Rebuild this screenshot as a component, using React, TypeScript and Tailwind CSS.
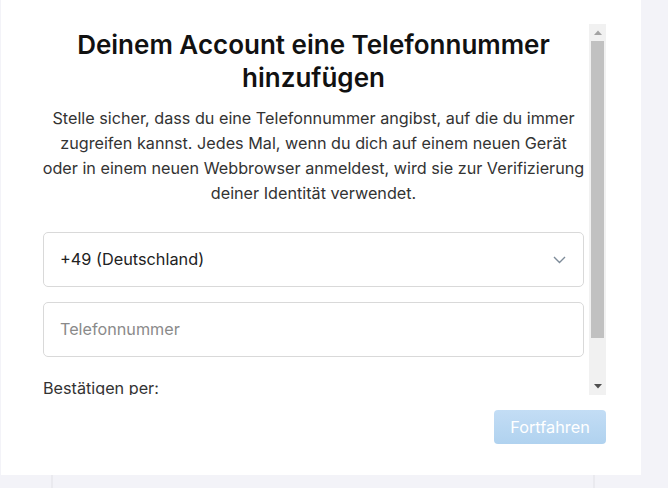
import React from "react";

function Chevron() {
  return (
    <svg width="13" height="8" viewBox="0 0 13 8" fill="none">
      <polyline points="1,1 6.5,6.5 12,1" stroke="#7d8b99" strokeWidth="1.4" fill="none" />
    </svg>
  );
}

function Scrollbar() {
  return (
    <div className="w-[17px] h-[371px] bg-[#f1f1f1] flex flex-col shrink-0">
      <div className="h-[17px] flex items-center justify-center">
        <svg width="8" height="5" viewBox="0 0 8 5">
          <polygon points="0,5 8,5 4,0.5" fill="#a3a3a3" />
        </svg>
      </div>
      <div className="mx-[2px] h-[297px] bg-[#c1c1c1]" />
      <div className="flex-1" />
      <div className="h-[17px] flex items-center justify-center">
        <svg width="8" height="5" viewBox="0 0 8 5">
          <polygon points="0,0 8,0 4,4.5" fill="#505050" />
        </svg>
      </div>
    </div>
  );
}

export default function App() {
  return (
    <div
      className="w-[668px] h-[488px] bg-[#f3f3f8] overflow-hidden"
      style={{ fontFamily: "Inter, 'Noto Sans', sans-serif" }}
    >
      <div className="ml-[1px] w-[640px] h-[475px] bg-white pl-[42px] pr-[35px] pt-[24px] flex flex-col">
        <div className="flex gap-[5px] h-[371px]">
          <div className="w-[541px] h-[371px] overflow-hidden pt-[4px]">
            <h1 className="text-[26px] leading-[33px] font-semibold text-[#111111] text-center">
              Deinem Account eine Telefonnummer hinzufügen
            </h1>
            <p className="mt-[12px] -mx-[8px] text-[16.2px] leading-[25px] text-[#333333] text-center whitespace-nowrap">
              Stelle sicher, dass du eine Telefonnummer angibst, auf die du immer
              <br />
              zugreifen kannst. Jedes Mal, wenn du dich auf einem neuen Gerät
              <br />
              oder in einem neuen Webbrowser anmeldest, wird sie zur Verifizierung
              <br />
              deiner Identität verwendet.
            </p>
            <div className="mt-[26px] h-[55px] border border-[#d9d9d9] rounded-[5px] flex items-center justify-between pl-[16px] pr-[17px]">
              <span className="text-[16.3px] text-[#222222]">+49 (Deutschland)</span>
              <Chevron />
            </div>
            <div className="mt-[15px] h-[55px] border border-[#d9d9d9] rounded-[5px] flex items-center pl-[16px]">
              <span className="text-[16.2px] text-[#8a8a8a]">Telefonnummer</span>
            </div>
            <div className="mt-[19px] text-[16.2px] leading-[24px] text-[#333333]">Bestätigen per:</div>
          </div>
          <Scrollbar />
        </div>
        <div className="mt-[15px] flex justify-end">
          <div className="w-[112px] h-[34px] rounded-[4px] bg-gradient-to-b from-[#c3ddf5] to-[#b0d2ef] flex items-center justify-center text-white text-[16.3px]">
            Fortfahren
          </div>
        </div>
      </div>
      <div className="ml-[51px] w-[544px] h-[13px] border-x-2 border-[#eaeaef]" />
    </div>
  );
}
